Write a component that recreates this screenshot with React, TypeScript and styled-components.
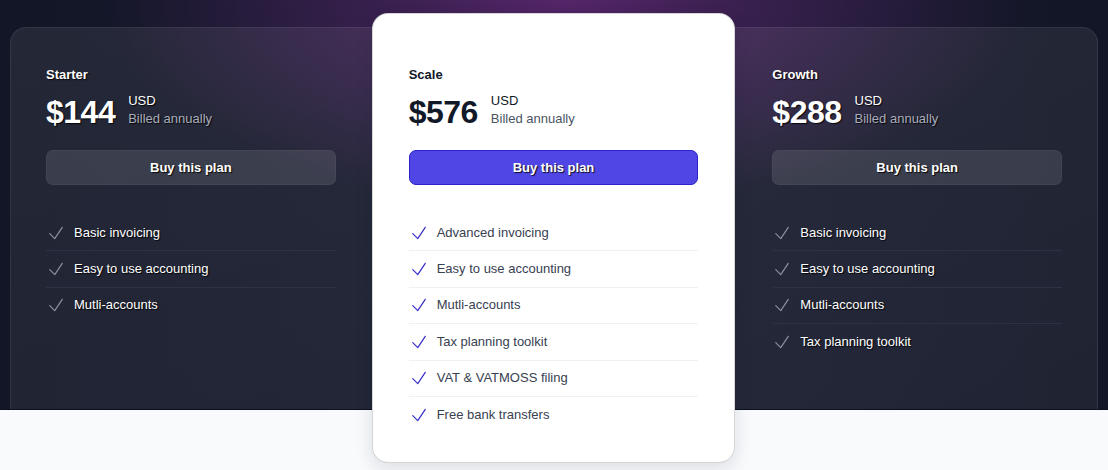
import React from "react";
import styled, { createGlobalStyle, css } from "styled-components";

const Global = createGlobalStyle`
  html, body { margin: 0; padding: 0; background: #f8fafc; }
  body { font-family: "Liberation Sans", Arial, sans-serif; -webkit-font-smoothing: antialiased; }
  * { box-sizing: border-box; }
`;

const Page = styled.div`
  width: 1108px;
  height: 470px;
  background: #f8fafc;
  overflow: hidden;
`;

const Hero = styled.section`
  height: 410px;
  padding: 27px 10px 0;
  display: flex;
  align-items: stretch;
  border-bottom: 1px solid #0c1020;
  background:
    radial-gradient(ellipse 470px 210px at 51% 0%, rgba(88, 38, 108, 0.95) 0%, rgba(78, 36, 100, 0.6) 40%, rgba(40, 30, 70, 0) 100%),
    linear-gradient(90deg, #121626 0%, #171b2e 50%, #121626 100%);
`;

const Card = styled.div<{ $featured?: boolean; $side?: "left" | "right" }>`
  flex: 1 1 0;
  min-width: 0;
  display: flex;
  flex-direction: column;
  padding: 37px 35px 0;
  ${(p) =>
    p.$featured
      ? css`
          position: relative;
          z-index: 1;
          margin: -14px 0 -54px;
          padding: 51px 36px 0;
          background: #ffffff;
          border: 1px solid rgba(0, 0, 0, 0.16);
          border-radius: 16px;
          box-shadow: 0 6px 18px rgba(15, 23, 42, 0.12);
          color: #111827;
        `
      : css`
          ${p.$side === "left" ? "margin-right: -24px; padding-right: 59px;" : "margin-left: -24px; padding-left: 60px;"}
          background: linear-gradient(160deg, rgba(255, 255, 255, 0.075) 0%, rgba(255, 255, 255, 0.06) 100%);
          border: 1px solid rgba(255, 255, 255, 0.08);
          border-bottom: none;
          border-radius: 16px 16px 0 0;
          color: #ffffff;
          text-shadow: 1px 1px 1px rgba(0, 0, 0, 0.85);
        `}
`;

const PlanName = styled.h3`
  margin: 0;
  font-size: 13px;
  line-height: 20px;
  font-weight: 700;
`;

const PriceRow = styled.div`
  display: flex;
  align-items: center;
  gap: 13px;
  margin-top: 7px;
`;

const Amount = styled.span`
  font-size: 32px;
  line-height: 40px;
  font-weight: 700;
  letter-spacing: -0.5px;
`;

const PriceMeta = styled.div`
  display: flex;
  flex-direction: column;
  padding-bottom: 4px;
  font-size: 13px;
  line-height: 18px;
`;

const Billed = styled.span<{ $featured?: boolean }>`
  color: ${(p) => (p.$featured ? "#4b5563" : "#a9adbd")};
`;

const BuyButton = styled.button<{ $featured?: boolean }>`
  margin-top: 18px;
  height: 35px;
  width: 100%;
  border-radius: 7px;
  font-family: inherit;
  font-size: 13px;
  font-weight: 700;
  color: #ffffff;
  cursor: pointer;
  text-shadow: 1px 1px 1px rgba(0, 0, 0, 0.85);
  ${(p) =>
    p.$featured
      ? css`
          background: #4f46e5;
          border: 1px solid #2b22c9;
        `
      : css`
          background: rgba(255, 255, 255, 0.11);
          border: 1px solid rgba(255, 255, 255, 0.04);
        `}
`;

const Features = styled.ul`
  list-style: none;
  margin: 30px 0 0;
  padding: 0;
`;

const Feature = styled.li<{ $featured?: boolean; $first?: boolean }>`
  display: flex;
  align-items: center;
  gap: 8px;
  padding: 7.7px 0;
  font-size: 13px;
  line-height: 20px;
  color: ${(p) => (p.$featured ? "#374151" : "#ffffff")};
  border-top: ${(p) => (p.$first ? "0" : "1px")} solid ${(p) => (p.$featured ? "#eff0f3" : "#2d3145")};
`;

const CheckIcon = styled.svg<{ $featured?: boolean }>`
  flex: none;
  width: 20px;
  height: 20px;
  color: ${(p) => (p.$featured ? "#3a32c9" : "#8a8d9c")};
`;

const Check = ({ featured }: { featured?: boolean }) => (
  <CheckIcon $featured={featured} viewBox="0 0 24 24" fill="none" stroke="currentColor" strokeWidth={1.5}>
    <path strokeLinecap="round" strokeLinejoin="round" d="M4.5 12.75l6 6 9-13.5" />
  </CheckIcon>
);

type Plan = { name: string; price: string; features: string[]; featured?: boolean; side?: "left" | "right" };

const plans: Plan[] = [
  { name: "Starter", price: "$144", side: "left", features: ["Basic invoicing", "Easy to use accounting", "Mutli-accounts"] },
  {
    name: "Scale",
    price: "$576",
    featured: true,
    features: [
      "Advanced invoicing",
      "Easy to use accounting",
      "Mutli-accounts",
      "Tax planning toolkit",
      "VAT & VATMOSS filing",
      "Free bank transfers",
    ],
  },
  {
    name: "Growth",
    price: "$288",
    side: "right",
    features: ["Basic invoicing", "Easy to use accounting", "Mutli-accounts", "Tax planning toolkit"],
  },
];

export default function App() {
  return (
    <Page>
      <Global />
      <Hero>
        {plans.map((plan) => (
          <Card key={plan.name} $featured={plan.featured} $side={plan.side}>
            <PlanName>{plan.name}</PlanName>
            <PriceRow>
              <Amount>{plan.price}</Amount>
              <PriceMeta>
                <span>USD</span>
                <Billed $featured={plan.featured}>Billed annually</Billed>
              </PriceMeta>
            </PriceRow>
            <BuyButton $featured={plan.featured}>Buy this plan</BuyButton>
            <Features>
              {plan.features.map((f, i) => (
                <Feature key={f} $featured={plan.featured} $first={i === 0}>
                  <Check featured={plan.featured} />
                  {f}
                </Feature>
              ))}
            </Features>
          </Card>
        ))}
      </Hero>
    </Page>
  );
}
